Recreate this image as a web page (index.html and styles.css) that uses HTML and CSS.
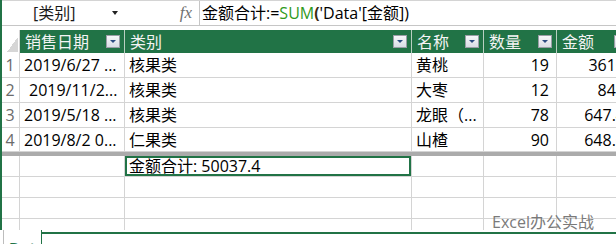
FILE: index.html
```html
<!DOCTYPE html>
<html>

<head>
    <title>Data</title>
    <meta name='viewport' content='width=device-width'>
    <link rel="stylesheet" href="styles.css">
</head>

<body>
    <div class='window'>
        <div class='formula-bar'>
            <div class='name-box'><span>[类别]</span><span class='caret'></span></div>
            <div class='fx'>fx</div>
            <div class='formula'>金额合计:=<span class='fn'>SUM</span><span class='paren'>(</span>'Data'[金额])</div>
        </div>

        <div class='grid'>
            <!-- header -->
            <div class='corner'></div>
            <div class='th'><span>销售日期</span><span class='filter'></span></div>
            <div class='th'><span>类别</span><span class='filter'></span></div>
            <div class='th'><span>名称</span><span class='filter'></span></div>
            <div class='th'><span>数量</span><span class='filter'></span></div>
            <div class='th'><span>金额</span><span class='filter'></span></div>

            <div class='td rn'>1</div>
            <div class='td'>2019/6/27 ...</div>
            <div class='td'>核果类</div>
            <div class='td'>黄桃</div>
            <div class='td num'>19</div>
            <div class='td num'>3610</div>

            <div class='td rn'>2</div>
            <div class='td indent'>2019/11/2...</div>
            <div class='td'>核果类</div>
            <div class='td'>大枣</div>
            <div class='td num'>12</div>
            <div class='td num'>840</div>

            <div class='td rn'>3</div>
            <div class='td'>2019/5/18 ...</div>
            <div class='td'>核果类</div>
            <div class='td'>龙眼（...</div>
            <div class='td num'>78</div>
            <div class='td num'>647.4</div>

            <div class='td rn'>4</div>
            <div class='td'>2019/8/2 0...</div>
            <div class='td'>仁果类</div>
            <div class='td'>山楂</div>
            <div class='td num'>90</div>
            <div class='td num'>648.0</div>

            <div class='table-end'></div>

            <div class='td'></div>
            <div class='td'></div>
            <div class='td selected'>金额合计: 50037.4</div>
            <div class='td'></div>
            <div class='td'></div>
            <div class='td'></div>

            <div class='td'></div><div class='td'></div><div class='td'></div>
            <div class='td'></div><div class='td'></div><div class='td'></div>

            <div class='td'></div><div class='td'></div><div class='td'></div>
            <div class='td'></div><div class='td'></div><div class='td'></div>

            <div class='td open'></div><div class='td open'></div><div class='td open'></div>
            <div class='td open'></div><div class='td open'></div><div class='td open'></div>
        </div>
    </div>

    <div class='tabs'>
        <div class='tab'>Data</div>
        <div class='tab-rest'></div>
    </div>

    <div class='watermark'>Excel办公实战</div>
</body>

</html>
```

FILE: styles.css
```css
body {
    margin: 0;
    width: 616px;
    height: 244px;
    overflow: hidden;
    position: relative;
    background: #fff;
    color: #000;
    font-family: "Open Sans", "Noto Sans CJK SC", sans-serif;
    font-size: 16px;
}

.window {
    height: 230px;
    border-left: 2px solid #217346;
    overflow: hidden;
}

/* formula bar */
.formula-bar {
    display: flex;
    height: 26px;
    box-sizing: border-box;
    border-top: 1px solid #d4d4d4;
    border-bottom: 1px solid #c6c6c6;
    margin-bottom: 4px;
}

.name-box {
    width: 128px;
    display: flex;
    align-items: center;
    justify-content: space-between;
    padding: 0 12px 0 31px;
    box-sizing: border-box;
    line-height: 1;
    color: #1a1a1a;
}

.caret {
    width: 0;
    height: 0;
    border-left: 3px solid transparent;
    border-right: 3px solid transparent;
    border-top: 4px solid #222;
}

.fx {
    width: 69px;
    display: flex;
    align-items: center;
    justify-content: flex-end;
    padding-right: 7px;
    box-sizing: border-box;
    font-family: "Liberation Serif", serif;
    font-style: italic;
    font-size: 17px;
    color: #707070;
}

.formula {
    flex: 1;
    border-left: 1px solid #c6c6c6;
    padding-left: 2px;
    display: flex;
    align-items: center;
    line-height: 1;
    white-space: nowrap;
}

.fn {
    color: #2f9a1c;
}

.paren {
    color: #3a2a10;
    font-weight: bold;
}

/* sheet */
.grid {
    display: grid;
    grid-template-columns: 18px 105px 287px 72px 73px 76px;
    grid-template-rows: 23px 25px 25px 25px 24px 4px 21px 21px 21px 11px;
}

.corner {
    border-right: 1px solid #d4d4d4;
    background: linear-gradient(to bottom right, transparent 50%, #d6d6d6 50%) no-repeat right 1px bottom 1px / 11px 15px;
}

.th {
    background: #217346;
    color: #f4f4f4;
    display: flex;
    align-items: center;
    justify-content: space-between;
    padding: 0 4px 0 5px;
    border-right: 1px solid #b9cfc1;
    line-height: 1;
    white-space: nowrap;
}

.filter {
    width: 14px;
    height: 13px;
    box-sizing: border-box;
    border: 1px solid #9a9ea6;
    background: linear-gradient(#f6f7f9, #d9dde5);
    display: flex;
    align-items: center;
    justify-content: center;
    flex: none;
}

.filter::after {
    content: '';
    border-left: 3px solid transparent;
    border-right: 3px solid transparent;
    border-top: 3px solid #2c4c82;
}

.td {
    border-right: 1px solid #d4d4d4;
    border-bottom: 1px solid #d4d4d4;
    display: flex;
    align-items: center;
    padding: 0 4px;
    overflow: hidden;
    white-space: nowrap;
    line-height: 1;
}

.rn {
    justify-content: center;
    padding: 0 1px 0 0;
    color: #6b6b6b;
}

.indent {
    padding-left: 9px;
}

.num {
    justify-content: flex-end;
    padding-right: 7px;
}

.table-end {
    grid-column: 1 / -1;
    background: #ababab;
}

.selected {
    box-shadow: inset 0 0 0 2px #217346;
    padding-left: 4px;
}

.open {
    border-bottom: none;
}

/* sheet tabs */
.tabs {
    display: flex;
    height: 14px;
}

.tab {
    margin-left: 3px;
    width: 39px;
    border-left: 1px solid #bdbdbd;
    border-right: 1px solid #217346;
    padding: 10px 0 0 5px;
    box-sizing: border-box;
    font-size: 15px;
    font-weight: bold;
    color: #217346;
    line-height: 1;
    overflow: hidden;
}

.tab-rest {
    flex: 1;
    margin-top: 2px;
    border-top: 2px solid #217346;
}

.watermark {
    position: absolute;
    left: 492px;
    top: 214px;
    font-size: 16px;
    line-height: 1;
    color: #7a7a7a;
    white-space: nowrap;
}
```
